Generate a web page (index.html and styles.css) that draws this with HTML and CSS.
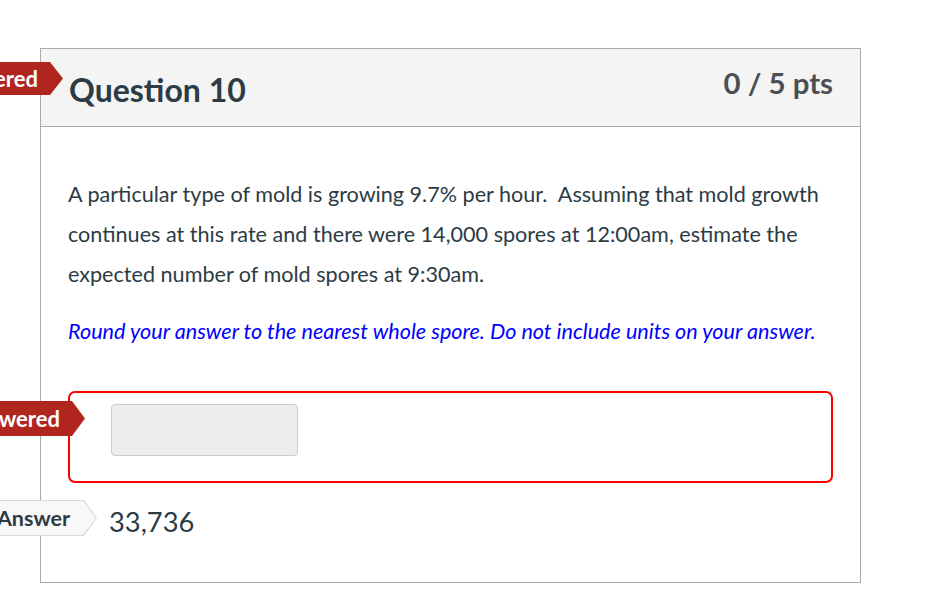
FILE: index.html
```html
<!DOCTYPE html>
<html lang="en">
<head>
<meta charset="utf-8">
<title>Question 10</title>
<link rel="stylesheet" href="styles.css">
</head>
<body>
<div class="page">
  <div class="card">
    <div class="flag flag-red flag-top"><span>Unanswered</span></div>
    <div class="header">
      <h2 class="title">Question 10</h2>
      <div class="pts">0 / 5 pts</div>
    </div>
    <div class="content">
      <p class="text">A particular type of mold is growing 9.7% per hour.&nbsp; Assuming that mold growth continues at this rate and there were 14,000 spores at 12:00am, estimate the expected number of mold spores at 9:30am.</p>
      <p class="hint">Round your answer to the nearest whole spore. Do not include units on your answer.</p>
      <div class="answer-box">
        <div class="input"></div>
      </div>
      <div class="answer-row">
        <span class="answer-value">33,736</span>
      </div>
    </div>
    <div class="flag flag-red flag-mid"><span>Unanswered</span></div>
    <div class="flag flag-light flag-ans"><span>Correct Answer</span></div>
  </div>
</div>
</body>
</html>
```

FILE: styles.css
```css
* { box-sizing: border-box; }

html, body {
  margin: 0;
  padding: 0;
  background: #ffffff;
  overflow: hidden;
}

body {
  font-family: Lato, "Noto Sans", "Liberation Sans", sans-serif;
  color: #2d3b45;
}

.page {
  padding: 48px 0 0 40px;
}

.card {
  position: relative;
  width: 821px;
  height: 535px;
  border: 1px solid #aaaaaa;
  background: #ffffff;
}

.header {
  display: flex;
  align-items: center;
  justify-content: space-between;
  height: 78px;
  padding: 0 27px 0 28px;
  background: #f4f4f4;
  border-bottom: 1px solid #aaaaaa;
}

.title {
  margin: 3px 0 0 0;
  font-size: 32px;
  font-weight: 700;
  color: #2d3b45;
}

.pts {
  margin-top: -11px;
  font-size: 29.4px;
  font-weight: 700;
  color: #4a4f54;
}

.content {
  padding: 47px 27px 0 27px;
}

.text {
  margin: 0;
  font-size: 21.6px;
  line-height: 40px;
  color: #2d3b45;
}

.hint {
  margin: 17px 0 0 0;
  font-size: 21.6px;
  line-height: 40px;
  font-style: italic;
  color: #0000ff;
}

.answer-box {
  margin-top: 40px;
  height: 92px;
  border: 2px solid #ff0000;
  border-radius: 7px;
  padding: 11px 0 0 41px;
}

.input {
  width: 187px;
  height: 52px;
  background: #ededed;
  border: 1px solid #cccccc;
  border-radius: 4px;
}

.answer-row {
  display: flex;
  align-items: center;
  height: 36px;
  margin-top: 19px;
  padding-left: 41px;
}

.answer-value {
  font-size: 27.3px;
  line-height: 36px;
  padding-top: 4px;
  color: #2d3b45;
}

.flag {
  position: absolute;
  height: 34px;
  padding: 0 25px 0 40px;
  display: flex;
  align-items: center;
  white-space: nowrap;
  font-weight: 700;
  clip-path: polygon(0 0, calc(100% - 13px) 0, 100% 50%, calc(100% - 13px) 100%, 0 100%);
}

.flag span { position: relative; z-index: 1; }

.flag-red {
  background: #b0261f;
  color: #ffffff;
  font-size: 22px;
}

.flag-top {
  top: 13px;
  right: calc(100% - 22px);
  height: 33px;
}

.flag-mid {
  top: 352px;
  right: calc(100% - 44px);
  height: 35px;
}

.flag-light {
  background: #d8d8d8;
  color: #2d3b45;
  font-size: 21.5px;
  height: 36px;
  padding-right: 27px;
}

.flag-light::before {
  content: "";
  position: absolute;
  inset: 1px 1px 1px 0;
  background: #f8f8f8;
  clip-path: polygon(0 0, calc(100% - 13px) 0, 100% 50%, calc(100% - 13px) 100%, 0 100%);
}

.flag-ans {
  top: 451px;
  right: calc(100% - 56px);
}
```
